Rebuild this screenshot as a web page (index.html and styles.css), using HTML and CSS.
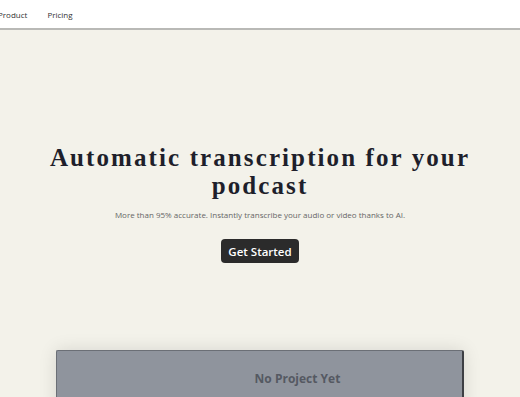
FILE: index.html
```html
<!DOCTYPE html>
<html lang="en">

<head>
    <meta charset="UTF-8" />
    <title>Podcast transcription</title>
    <link rel="stylesheet" href="styles.css">
</head>

<body>
    <nav class="topbar">
        <a href="#" class="nav-link">Product</a>
        <a href="#" class="nav-link">Pricing</a>
    </nav>

    <main class="hero">
        <h1 class="hero-title">Automatic transcription for your podcast</h1>
        <p class="hero-sub">More than 95% accurate. Instantly transcribe your audio or video thanks to AI.</p>
        <button class="cta">Get Started</button>

        <div class="projects">
            <div class="empty">No Project Yet</div>
        </div>
    </main>
</body>

</html>
```

FILE: styles.css
```css
body {
    margin: 0;
    background-color: #f3f2ea;
    font-family: "Open Sans", "Liberation Sans", sans-serif;
    overflow: hidden;
}

.topbar {
    display: flex;
    align-items: center;
    gap: 20px;
    height: 28px;
    margin-left: -2px;
    background-color: #fff;
    border-bottom: 2px solid #b9b9b6;
}

.nav-link {
    font-size: 8px;
    color: #333;
    text-decoration: none;
}

.hero {
    display: flex;
    flex-direction: column;
    align-items: center;
    padding-top: 114px;
}

.hero-title {
    margin: 0;
    width: 440px;
    text-align: center;
    font-family: "Liberation Serif", serif;
    font-weight: bold;
    font-size: 25px;
    line-height: 28px;
    letter-spacing: 2.1px;
    color: #1e1f2b;
}

.hero-sub {
    margin: 9px 0 0;
    font-size: 8px;
    color: #666;
}

.cta {
    margin-top: 19px;
    padding: 0 7px;
    height: 24px;
    border: none;
    border-radius: 4px;
    background-color: #2b2b2b;
    color: #fff;
    font-family: "Open Sans", "Liberation Sans", sans-serif;
    font-size: 11.5px;
    font-weight: 600;
}

.projects {
    margin-top: 87px;
    width: 405px;
    height: 60px;
    background-color: #8f949d;
    border: 1px solid #6b6f76;
    border-right: 2px solid #3d3f44;
    border-radius: 2px;
    box-shadow: 0 0 18px rgba(0, 0, 0, 0.12);
}

.empty {
    padding: 19px 0 0 76px;
    text-align: center;
    font-size: 12px;
    font-weight: bold;
    color: #555962;
}
```
